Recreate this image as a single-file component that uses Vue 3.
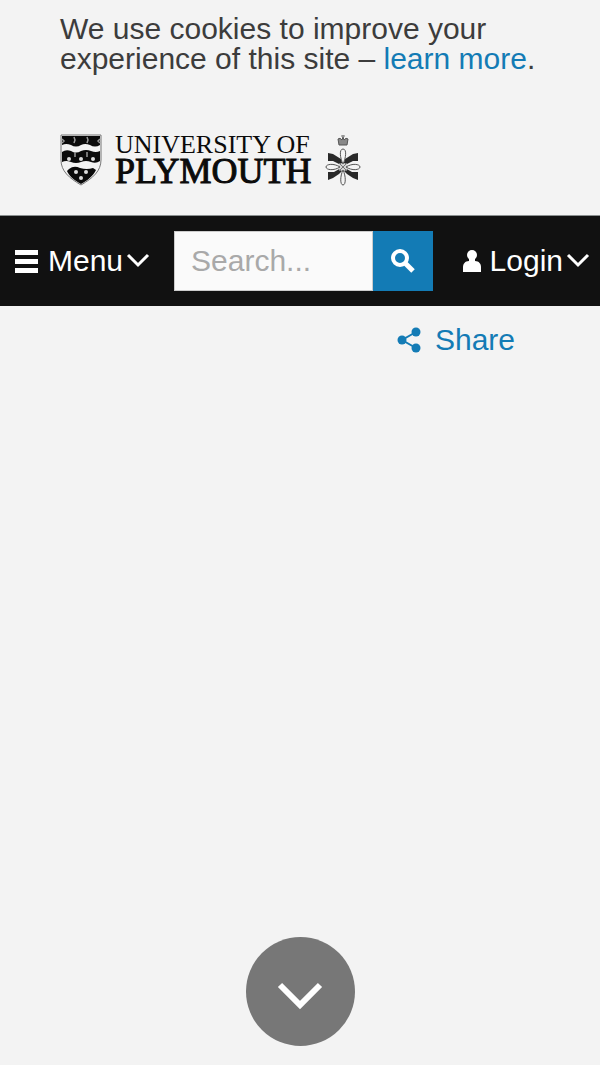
<template>
  <div class="page">
    <p class="cookies">
      We use cookies to improve your experience of this site – <a href="#">learn more</a>.
    </p>

    <header class="header">
      <a href="#" class="logo" aria-label="University of Plymouth">
        <!-- Shield -->
        <svg class="shield" viewBox="0 0 42 52">
          <path d="M1 1H41V26C41 37 33 44 21 51C9 44 1 37 1 26Z" fill="#f3f3f3" stroke="#777" />
          <path d="M2 2H40V11Q35 14 30 11Q25 9 21 11Q16 14 11 11Q6 9 2 11Z" fill="#0b0b0b" />
          <path d="M2 18Q6 15 11 17Q16 20 21 17Q26 15 31 17Q36 19 40 17V27Q36 30 31 28Q26 26 21 28Q16 30 11 28Q6 26 2 28Z" fill="#0b0b0b" />
          <path d="M9 35Q14 31 20 34Q27 36 33 34L36 36C33 42 28 46 21 50C14 46 9 42 7 37Z" fill="#0b0b0b" />
          <g fill="#ddd">
            <circle v-for="x in [9, 21, 33]" :key="x" :cx="x" cy="25" r="2" />
            <circle cx="16" cy="38" r="2" />
            <circle cx="26" cy="38" r="2" />
            <circle cx="21" cy="44" r="2" />
          </g>
          <path d="M2 5L4 7L2 9M14 3L15 6L14 9M27 3L28 6L27 9M40 5L38 7L40 9M15 18V23M27 18V23" fill="none" stroke="#999" stroke-width="1.5" />
        </svg>
        <span class="wordmark">
          <span class="university">UNIVERSITY OF</span>
          <span class="plymouth">PLYMOUTH</span>
        </span>
        <!-- Crowned ribbon emblem -->
        <svg class="emblem" viewBox="0 0 36 52">
          <path d="M13 5Q15 3 17 6L18 3L19 6Q21 3 23 5L22 11H14Z" fill="#888" stroke="#555" />
          <path d="M18 1V4M16 2H20" stroke="#777" />
          <g fill="#292929">
            <path d="M3 19L8 20L16 25L18 31L14 30L8 27L3 27Z" />
            <path d="M33 19L28 20L20 25L18 31L22 30L28 27L33 27Z" />
            <path d="M3 46V38L9 38L16 34L18 36L14 40L8 44Z" />
            <path d="M33 46V38L27 38L20 34L18 36L22 40L28 44Z" />
          </g>
          <ellipse cx="18" cy="33" rx="5" ry="4" fill="#d5d5d5" />
          <g fill="#f3f3f3" stroke="#555">
            <path d="M18 30C15 24 14 15 18 15S21 24 18 30Z" />
            <path d="M18 36C15 42 15 51 18 51S21 42 18 36Z" />
            <path d="M15 33C9 29 1 30 1 33S9 37 15 33Z" />
            <path d="M21 33C27 29 35 30 35 33S27 37 21 33Z" />
          </g>
          <path d="M14 29L22 37M22 29L14 37" stroke="#777" />
        </svg>
      </a>
    </header>

    <nav class="bar">
      <button type="button" class="bar-button">
        <svg class="menu-icon" viewBox="0 0 23 23">
          <path d="M0 0H23V5H0ZM0 9H23V14H0ZM0 18H23V23H0Z" fill="#fff" />
        </svg>
        <span>Menu</span>
        <svg class="chevron" viewBox="0 0 24 16">
          <path d="M2 2L12 12L22 2" fill="none" stroke="#fff" stroke-width="3" />
        </svg>
      </button>

      <form class="search" role="search" @submit.prevent>
        <input v-model="query" type="text" placeholder="Search..." aria-label="Search" />
        <button type="submit" aria-label="Search">
          <svg class="search-icon" viewBox="0 0 24 24">
            <circle cx="9" cy="9" r="7" fill="none" stroke="#fff" stroke-width="4" />
            <path d="M14 14L22 22" stroke="#fff" stroke-width="5" />
          </svg>
        </button>
      </form>

      <button type="button" class="bar-button login">
        <svg class="user-icon" viewBox="0 0 20 24">
          <circle cx="10" cy="6" r="5" fill="#fff" />
          <path d="M7 9H13V12C17 12 19 15 19 18V23H1V18C1 15 3 12 7 12Z" fill="#fff" />
        </svg>
        <span>Login</span>
        <svg class="chevron" viewBox="0 0 24 16">
          <path d="M2 2L12 12L22 2" fill="none" stroke="#fff" stroke-width="3" />
        </svg>
      </button>
    </nav>

    <div class="share-row">
      <a href="#" class="share">
        <svg class="share-icon" viewBox="0 0 24 26">
          <path d="M19 5L5 13L19 21" fill="none" stroke="#137bb5" stroke-width="2" />
          <g fill="#137bb5">
            <circle cx="19" cy="5" r="4.5" />
            <circle cx="5" cy="13" r="4.5" />
            <circle cx="19" cy="21" r="4.5" />
          </g>
        </svg>
        <span>Share</span>
      </a>
    </div>

    <button type="button" class="scroll-down" aria-label="Scroll down">
      <svg viewBox="0 0 46 28">
        <path d="M3 3L23 23L43 3" fill="none" stroke="#fff" stroke-width="6" />
      </svg>
    </button>
  </div>
</template>

<script setup>
import { ref } from 'vue';

const query = ref('');
</script>

<style>
body {
  margin: 0;
  background: #f3f3f3;
}
</style>

<style scoped>
.page {
  display: flex;
  flex-direction: column;
  box-sizing: border-box;
  min-height: 100vh;
  padding-bottom: 19px;
  font-family: "Liberation Sans", Arial, sans-serif;
  font-size: 30px;
  line-height: 30px;
  color: #3c3c3c;
}

a {
  color: #137bb5;
  text-decoration: none;
}

button {
  border: 0;
  padding: 0;
  font: inherit;
  cursor: pointer;
}

svg {
  display: block;
  flex: none;
}

.cookies {
  margin: 0;
  padding: 14px 60px 15px;
}

.header {
  display: flex;
  padding: 45px 60px 29px;
}

.logo {
  display: flex;
  align-items: flex-start;
  color: #0b0b0b;
}

.shield {
  width: 42px;
  height: 52px;
}

.wordmark {
  display: flex;
  flex-direction: column;
  margin: 0 14px 0 13px;
  font-family: "Liberation Serif", "Times New Roman", serif;
  white-space: nowrap;
}

.university {
  font-size: 26px;
  line-height: 22px;
}

.plymouth {
  font-size: 36px;
  line-height: 30px;
  -webkit-text-stroke: 1px #0b0b0b;
}

.emblem {
  width: 36px;
  height: 52px;
}

.bar {
  display: flex;
  align-items: center;
  box-sizing: border-box;
  height: 91px;
  border-top: 1px solid #8a8f8f;
  padding: 0 10px 0 15px;
  background: #111;
}

.bar-button {
  display: flex;
  align-items: center;
  background: none;
  color: #fff;
}

.menu-icon {
  width: 23px;
  height: 23px;
  margin-right: 10px;
}

.chevron {
  width: 24px;
  height: 16px;
  margin-left: 3px;
}

.search {
  display: flex;
  flex: 1;
  min-width: 0;
  height: 60px;
  margin: 0 29px 0 24px;
}

.search input {
  flex: 1;
  min-width: 0;
  box-sizing: border-box;
  border: 1px solid #ccc;
  border-radius: 0;
  padding: 0 16px;
  background: #fafafa;
  font: inherit;
  color: #3c3c3c;
  outline: none;
}

.search input::placeholder {
  color: #a9a9a9;
  opacity: 1;
}

.search button {
  display: flex;
  align-items: center;
  justify-content: center;
  width: 60px;
  background: #137bb5;
}

.search-icon {
  width: 24px;
  height: 24px;
}

.user-icon {
  width: 20px;
  height: 24px;
  margin-right: 8px;
}

.share-row {
  display: flex;
  justify-content: flex-end;
  padding: 19px 85px 0 0;
}

.share {
  display: flex;
  align-items: center;
}

.share-icon {
  width: 24px;
  height: 26px;
  margin-right: 14px;
}

.scroll-down {
  display: flex;
  align-items: center;
  justify-content: center;
  align-self: center;
  box-sizing: border-box;
  width: 109px;
  height: 109px;
  margin-top: auto;
  padding-top: 8px;
  border-radius: 50%;
  background: #777;
}

.scroll-down svg {
  width: 46px;
  height: 28px;
}
</style>
